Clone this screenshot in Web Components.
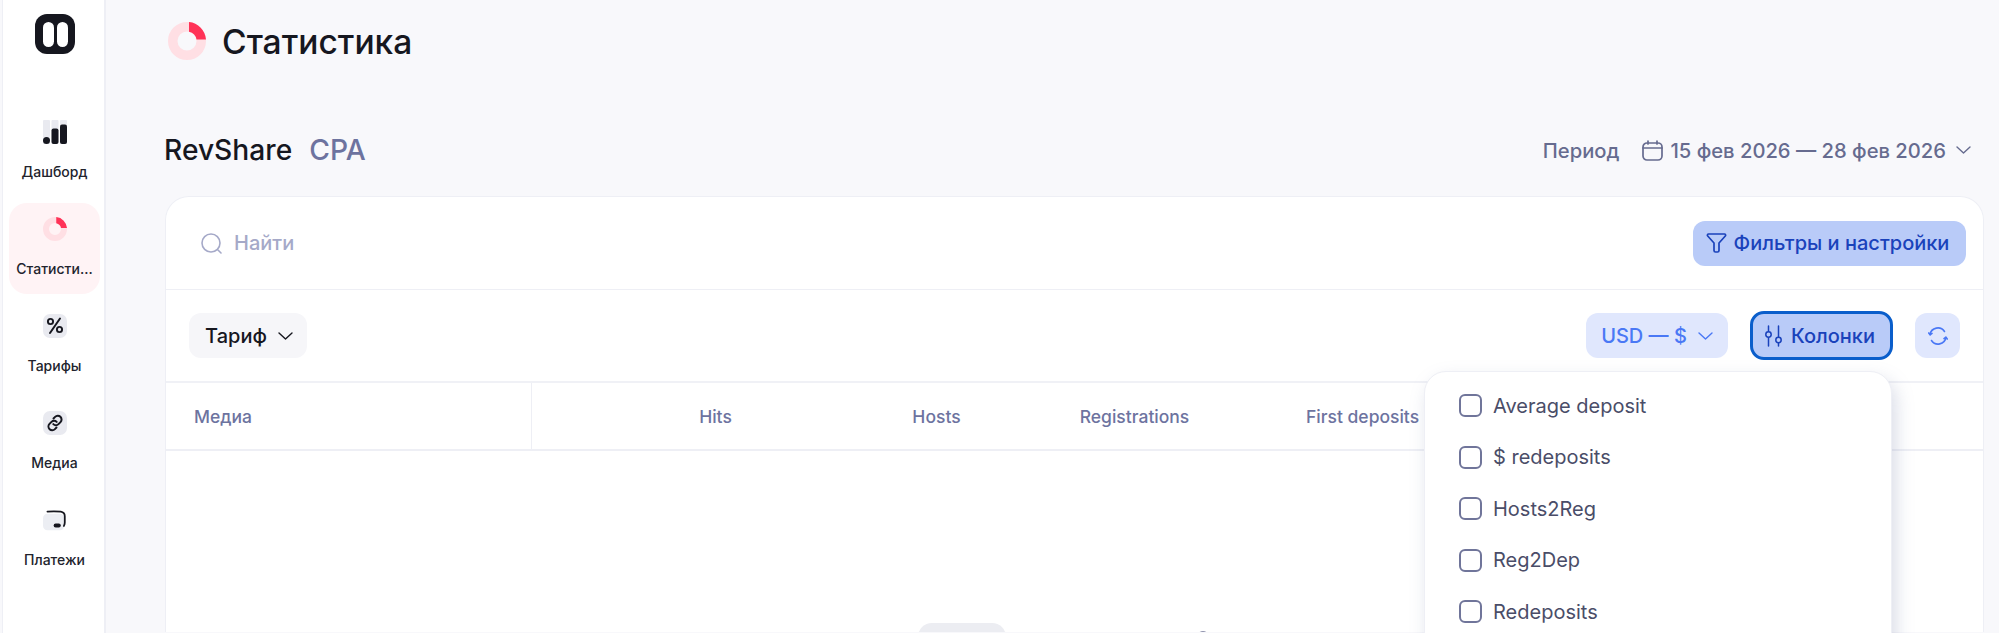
<!DOCTYPE html>
<html lang="ru">
<head>
<meta charset="utf-8">
<title>Статистика</title>
<style>
    html, body { margin: 0; height: 634px; overflow: hidden; background: #fff; }
    body { font-family: Inter, "Noto Sans", sans-serif; color: #16171f; }
</style>
</head>
<body>
<stat-app></stat-app>

<script>
const CHEVRON = `<svg width="15" height="8" viewBox="0 0 15 8" fill="none" stroke="currentColor" stroke-width="1.4" stroke-linecap="round" stroke-linejoin="round"><path d="M1 1l6.5 6 6.5-6"/></svg>`;

function donut(size) {
    return `<svg width="${size}" height="${size}" viewBox="0 0 38 38" fill="none">
        <circle cx="19" cy="19" r="14.25" stroke="#ffdfe4" stroke-width="9.5"/>
        <path d="M21 .1A19 19 0 0 1 38 17.6H28.5A9.5 9.5 0 0 0 21 9.7Z" fill="#ff3257"/>
    </svg>`;
}

const NAV_ICONS = {
    dash: `<svg width="24" height="24" viewBox="0 0 24 24">
        <rect x="0" y="0" width="7" height="24" rx="1" fill="#e9eaf0"/>
        <rect x="8.5" y="0" width="7" height="24" rx="1" fill="#e9eaf0"/>
        <rect x="17" y="0" width="7" height="24" rx="1" fill="#e9eaf0"/>
        <rect x="0" y="17" width="7" height="7" rx="3.5" fill="#16171f"/>
        <rect x="8.5" y="8.5" width="7" height="15.5" rx="2" fill="#16171f"/>
        <rect x="17" y="4.5" width="7" height="19.5" rx="2" fill="#16171f"/>
    </svg>`,
    stat: donut(24),
    percent: `<svg width="24" height="24" viewBox="0 0 24 24" fill="none">
        <rect width="24" height="24" rx="7" fill="#e9eaf0"/>
        <circle cx="7.5" cy="7.5" r="2.6" stroke="#16171f" stroke-width="1.9"/>
        <circle cx="16.5" cy="15.5" r="2.6" stroke="#16171f" stroke-width="1.9"/>
        <path d="M17 4.5L7 19" stroke="#16171f" stroke-width="2" stroke-linecap="round"/>
    </svg>`,
    link: `<svg width="24" height="24" viewBox="0 0 24 24" fill="none">
        <rect width="24" height="24" rx="7" fill="#e9eaf0"/>
        <g stroke="#16171f" stroke-width="2" stroke-linecap="round">
            <path d="M10.5 7.5l1.6-1.6a3.7 3.7 0 0 1 5.4 5.2l-2 2a3.7 3.7 0 0 1-5.2 0"/>
            <path d="M13.5 16.5l-1.6 1.6a3.7 3.7 0 0 1-5.4-5.2l2-2a3.7 3.7 0 0 1 5.2 0"/>
        </g>
    </svg>`,
    wallet: `<svg width="27" height="24" viewBox="0 0 27 24" fill="none">
        <rect x="0" y="5" width="24" height="18.5" rx="5" fill="#eceef3"/>
        <path d="M5 2.5c6-.5 11-.4 15 .2 3.5.6 4.5 2 4.5 5v7c0 1.5-.5 3-1 4" stroke="#16171f" stroke-width="2" stroke-linecap="round"/>
        <rect x="12" y="16" width="8" height="4.5" rx="2.2" fill="#16171f"/>
    </svg>`
};

const CTRL_ICONS = {
    search: `<svg width="21" height="21" viewBox="0 0 21 21" fill="none" stroke="#a5a9c8" stroke-width="1.6" stroke-linecap="round"><circle cx="10" cy="10" r="9"/><path d="M17 17l3 3"/></svg>`,
    calendar: `<svg width="21" height="21" viewBox="0 0 21 21" fill="none" stroke="currentColor" stroke-width="1.7" stroke-linecap="round" stroke-linejoin="round"><rect x="1" y="3" width="19" height="17" rx="4"/><path d="M1 8h19M6 1v3M15 1v3"/></svg>`,
    filter: `<svg width="21" height="20" viewBox="0 0 21 20" fill="none" stroke="currentColor" stroke-width="1.7" stroke-linejoin="round"><path d="M2.5 1h16c1 0 1.5 1.2.8 2L13 10v7.5c0 1-.8 1.5-1.5 1.5h-2C8.800 19 8 18.5 8 17.5V10L1.700 3c-.7-.8-.2-2 .8-2z"/></svg>`,
    sliders: `<svg width="17" height="22" viewBox="0 0 17 22" fill="none" stroke="currentColor" stroke-width="1.5" stroke-linecap="round"><path d="M3.5 1v5M3.5 13v8M13.5 1v11M13.5 18v3"/><circle cx="3.5" cy="9.5" r="2.7"/><circle cx="13.5" cy="15" r="2.7"/></svg>`,
    refresh: `<svg width="20" height="20" viewBox="0 0 20 20" fill="none" stroke="currentColor" stroke-width="1.6" stroke-linecap="round" stroke-linejoin="round"><path d="M2 8.5A8 8 0 0 1 16.5 5.5"/><path d="M18 11.5A8 8 0 0 1 3.5 14.5"/><path d="M.7 7l1.4 1.8L4 7.4M19.3 13l-1.4-1.8-1.9 1.4"/></svg>`
};

class NavItem extends HTMLElement {
    constructor() {
        super();
        this.attachShadow({ mode: 'open' });
        const icon = NAV_ICONS[this.getAttribute('icon')] || '';
        this.shadowRoot.innerHTML = `
            <style>
                :host {
                    display: flex;
                    flex-direction: column;
                    align-items: center;
                    box-sizing: border-box;
                    width: 91px;
                    height: 91px;
                    padding-top: 14px;
                    border-radius: 18px;
                    font-size: 14px;
                    font-weight: 500;
                    color: #22232d;
                }
                :host([active]) {
                    background: #fff3f5;
                }
                .icon {
                    display: flex;
                    width: 24px;
                    height: 24px;
                }
                .label {
                    margin-top: 19px;
                    line-height: 17px;
                    white-space: nowrap;
                }
            </style>
            <div class="icon">${icon}</div>
            <div class="label"><slot></slot></div>
        `;
    }
}

class SideBar extends HTMLElement {
    constructor() {
        super();
        this.attachShadow({ mode: 'open' });
        this.shadowRoot.innerHTML = `
            <style>
                :host {
                    display: flex;
                    flex-direction: column;
                    align-items: center;
                    flex: none;
                    box-sizing: border-box;
                    width: 104px;
                    height: 100%;
                    margin-left: 2px;
                    margin-right: 1px;
                    padding-left: 2px;
                    background: #fff;
                    border-right: 2px solid #eeeff5;
                    border-left: 1px solid #eeeff5;
                }
                .logo {
                    margin: 14px 0 52px;
                }
                nav {
                    display: flex;
                    flex-direction: column;
                    gap: 6px;
                }
            </style>
            <svg class="logo" width="40" height="40" viewBox="0 0 40 40">
                <rect width="40" height="40" rx="12" fill="#16171f"/>
                <rect x="8" y="8" width="11" height="25" rx="5.5" fill="#fff"/>
                <rect x="22" y="8" width="11" height="25" rx="5.5" fill="#fff"/>
            </svg>
            <nav><slot></slot></nav>
        `;
    }
}

class PageHeader extends HTMLElement {
    constructor() {
        super();
        this.attachShadow({ mode: 'open' });
        this.shadowRoot.innerHTML = `
            <style>
                :host {
                    display: flex;
                    align-items: center;
                    gap: 16px;
                    height: 38px;
                    margin-left: 3px;
                    font-size: 33.6px;
                    font-weight: 500;
                    color: #16171f;
                }
            </style>
            ${donut(38)}
            <span><slot></slot></span>
        `;
    }
}

class PeriodBar extends HTMLElement {
    constructor() {
        super();
        this.attachShadow({ mode: 'open' });
        this.shadowRoot.innerHTML = `
            <style>
                :host {
                    display: flex;
                    align-items: center;
                    height: 40px;
                    font-weight: 500;
                }
                .tabs {
                    display: flex;
                    gap: 17px;
                    margin-left: -1px;
                    font-size: 28.2px;
                    color: #6d739f;
                }
                .tabs b {
                    font-weight: 500;
                    color: #16171f;
                }
                .period {
                    display: flex;
                    align-items: center;
                    margin-left: auto;
                    padding-right: 28px;
                    font-size: 20.2px;
                    color: #666b8f;
                }
                .period .range {
                    margin: 0 10px 0 7px;
                }
                .period .name {
                    margin-right: 23px;
                }
            </style>
            <div class="tabs"><b>RevShare</b><span>CPA</span></div>
            <div class="period">
                <span class="name">Период</span>
                ${CTRL_ICONS.calendar}
                <span class="range">15 фев 2026 — 28 фев 2026</span>
                ${CHEVRON}
            </div>
        `;
    }
}

class UiButton extends HTMLElement {
    constructor() {
        super();
        this.attachShadow({ mode: 'open' });
        const icon = CTRL_ICONS[this.getAttribute('icon')] || '';
        const chevron = this.hasAttribute('chevron') ? CHEVRON : '';
        const label = this.textContent.trim() ? '<span><slot></slot></span>' : '';
        this.shadowRoot.innerHTML = `
            <style>
                :host {
                    display: inline-flex;
                    align-items: center;
                    justify-content: center;
                    box-sizing: border-box;
                    height: 45px;
                    gap: 7px;
                    border-radius: 12px;
                    font-size: 20px;
                    font-weight: 500;
                    white-space: nowrap;
                }
                :host([chevron]) { gap: 11px; }
                :host([kind="grey"]) { background: #f6f6f9; color: #16171f; }
                :host([kind="soft"]) { background: #e0e7fd; color: #4a78f5; }
                :host([kind="strong"]) { background: #b9cbf8; color: #1a42bb; }
                :host([focused]) {
                    height: 49px;
                    gap: 9px;
                    border: 3px solid #0a5ecb;
                    border-radius: 14px;
                }
            </style>
            ${icon}${label}${chevron}
        `;
    }
}

class SearchRow extends HTMLElement {
    constructor() {
        super();
        this.attachShadow({ mode: 'open' });
        this.shadowRoot.innerHTML = `
            <style>
                :host {
                    display: flex;
                    align-items: center;
                    box-sizing: border-box;
                    height: 93px;
                    padding: 0 17px 0 35px;
                    gap: 12px;
                    border-bottom: 1px solid #eeeff5;
                    font-size: 20px;
                    font-weight: 500;
                    color: #a5a9c8;
                }
                .spacer { flex: 1; }
            </style>
            ${CTRL_ICONS.search}
            <span>Найти</span>
            <div class="spacer"></div>
            <slot></slot>
        `;
    }
}

class ToolRow extends HTMLElement {
    constructor() {
        super();
        this.attachShadow({ mode: 'open' });
        this.shadowRoot.innerHTML = `
            <style>
                :host {
                    display: flex;
                    align-items: center;
                    box-sizing: border-box;
                    height: 93px;
                    padding: 0 23px;
                    gap: 22px;
                    border-bottom: 2px solid #f0f1f6;
                }
                ::slotted(:first-child) { margin-right: auto; }
            </style>
            <slot></slot>
        `;
    }
}

class TableHead extends HTMLElement {
    constructor() {
        super();
        this.attachShadow({ mode: 'open' });
        this.shadowRoot.innerHTML = `
            <style>
                :host {
                    display: grid;
                    grid-template-columns: 366px 367px 75px 321px 1fr;
                    align-items: stretch;
                    height: 68px;
                    box-sizing: border-box;
                    border-bottom: 2px solid #eeeff5;
                    font-size: 17.5px;
                    font-weight: 500;
                    color: #6d739f;
                }
                div {
                    display: flex;
                    align-items: center;
                    justify-content: center;
                }
                .media {
                    justify-content: flex-start;
                    padding-left: 28px;
                    border-right: 1px solid #eeeff5;
                }
                .first {
                    justify-content: flex-start;
                    padding-left: 11px;
                }
            </style>
            <div class="media">Медиа</div>
            <div>Hits</div>
            <div>Hosts</div>
            <div>Registrations</div>
            <div class="first">First deposits</div>
        `;
    }
}

class ColumnCheck extends HTMLElement {
    constructor() {
        super();
        this.attachShadow({ mode: 'open' });
        this.shadowRoot.innerHTML = `
            <style>
                :host {
                    display: flex;
                    align-items: center;
                    flex: none;
                    gap: 11px;
                    height: 23px;
                    font-size: 20px;
                    color: #4a4d68;
                    white-space: nowrap;
                }
                i {
                    flex: none;
                    box-sizing: border-box;
                    width: 23px;
                    height: 23px;
                    border: 2px solid #70759a;
                    border-radius: 6px;
                }
            </style>
            <i></i><span><slot></slot></span>
        `;
    }
}

class ColumnMenu extends HTMLElement {
    constructor() {
        super();
        this.attachShadow({ mode: 'open' });
        this.shadowRoot.innerHTML = `
            <style>
                :host {
                    position: absolute;
                    top: 371px;
                    left: 1424px;
                    display: flex;
                    flex-direction: column;
                    gap: 28.5px;
                    box-sizing: border-box;
                    width: 468px;
                    height: 300px;
                    padding: 22px 34px;
                    background: #fff;
                    border: 1px solid #eeeff5;
                    border-radius: 22px;
                    box-shadow: 4px 8px 18px rgba(120, 130, 170, .28);
                }
            </style>
            <slot></slot>
        `;
    }
}

class StatCard extends HTMLElement {
    constructor() {
        super();
        this.attachShadow({ mode: 'open' });
        this.shadowRoot.innerHTML = `
            <style>
                :host {
                    display: block;
                    box-sizing: border-box;
                    height: 436px;
                    margin-top: 26px;
                    margin-right: 15px;
                    background: #fff;
                    border: 1px solid #eeeff5;
                    border-bottom: 0;
                    border-radius: 24px 24px 0 0;
                    overflow: hidden;
                }
                .skeleton {
                    display: flex;
                    align-items: flex-start;
                    height: 180px;
                    padding: 172px 0 0 752px;
                    box-sizing: border-box;
                }
                .pill {
                    width: 88px;
                    height: 40px;
                    border-radius: 14px;
                    background: #ecedf2;
                }
                .dot {
                    width: 12px;
                    height: 12px;
                    margin: 8px 0 0 191px;
                    border-radius: 50%;
                    background: #8f93ad;
                }
            </style>
            <slot></slot>
            <div class="skeleton"><div class="pill"></div><div class="dot"></div></div>
        `;
    }
}

class StatApp extends HTMLElement {
    constructor() {
        super();
        this.attachShadow({ mode: 'open' });
        this.shadowRoot.innerHTML = `
            <style>
                :host {
                    display: flex;
                    position: relative;
                    width: 1999px;
                    height: 633px;
                    overflow: hidden;
                    background: #f8f8fb;
                }
                main {
                    flex: 1;
                    min-width: 0;
                    padding: 22px 0 0 58px;
                }
                .gap { height: 70px; }
            </style>
            <side-bar>
                <nav-item icon="dash">Дашборд</nav-item>
                <nav-item icon="stat" active>Статисти...</nav-item>
                <nav-item icon="percent">Тарифы</nav-item>
                <nav-item icon="link">Медиа</nav-item>
                <nav-item icon="wallet">Платежи</nav-item>
            </side-bar>
            <main>
                <page-header>Статистика</page-header>
                <div class="gap"></div>
                <period-bar></period-bar>
                <stat-card>
                    <search-row>
                        <ui-button kind="strong" icon="filter" style="width:273px;padding-right:4px">Фильтры и настройки</ui-button>
                    </search-row>
                    <tool-row>
                        <ui-button kind="grey" chevron style="width:118px;padding-left:2px">Тариф</ui-button>
                        <ui-button kind="soft" chevron style="width:142px">USD — $</ui-button>
                        <ui-button kind="strong" icon="sliders" focused style="width:143px;padding-right:3px">Колонки</ui-button>
                        <ui-button kind="soft" icon="refresh" style="width:45px"></ui-button>
                    </tool-row>
                    <table-head></table-head>
                </stat-card>
            </main>
            <column-menu>
                <column-check>Average deposit</column-check>
                <column-check>$ redeposits</column-check>
                <column-check>Hosts2Reg</column-check>
                <column-check>Reg2Dep</column-check>
                <column-check>Redeposits</column-check>
            </column-menu>
        `;
    }
}

customElements.define('nav-item', NavItem);
customElements.define('side-bar', SideBar);
customElements.define('page-header', PageHeader);
customElements.define('period-bar', PeriodBar);
customElements.define('ui-button', UiButton);
customElements.define('search-row', SearchRow);
customElements.define('tool-row', ToolRow);
customElements.define('table-head', TableHead);
customElements.define('column-check', ColumnCheck);
customElements.define('column-menu', ColumnMenu);
customElements.define('stat-card', StatCard);
customElements.define('stat-app', StatApp);
</script>
</body>
</html>
